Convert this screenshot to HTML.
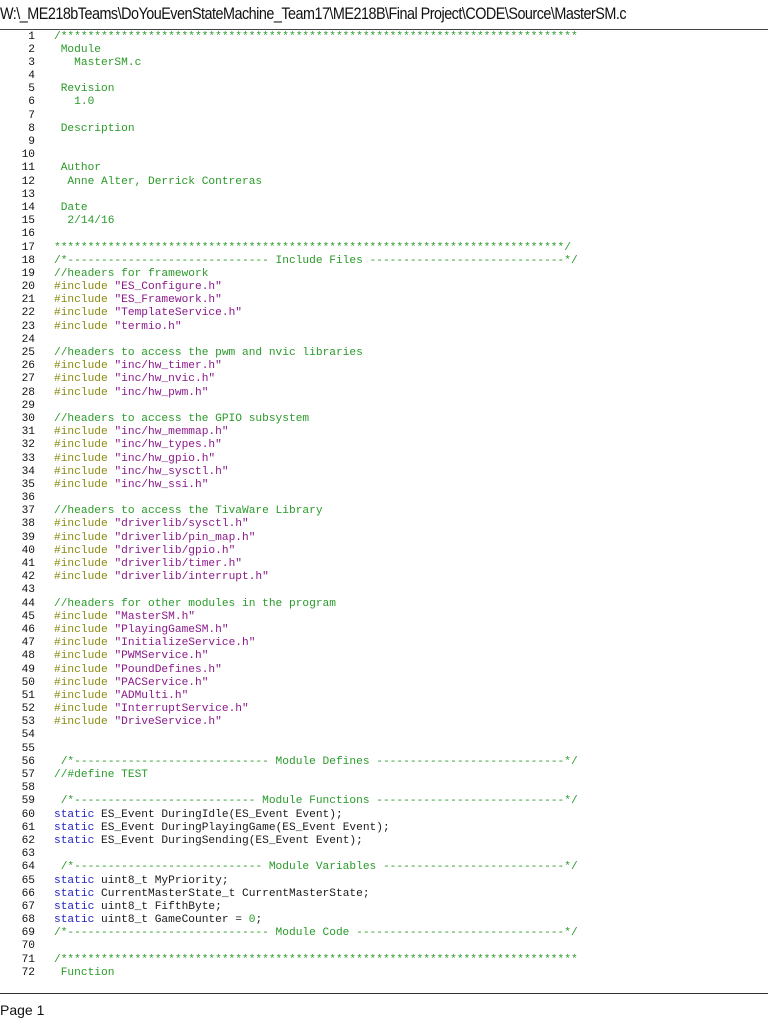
<!DOCTYPE html>
<html><head><meta charset="utf-8"><style>
html,body{margin:0;padding:0;background:#fff;width:768px;height:1024px;overflow:hidden}
.hdr{position:absolute;left:0;top:4px;font:17px "Liberation Sans",sans-serif;color:#111;letter-spacing:-0.6px;white-space:nowrap;transform:scaleX(0.846);transform-origin:0 0}
.hl{position:absolute;left:0;top:29px;width:768px;height:1px;background:#444}
.fl{position:absolute;left:0;top:993px;width:768px;height:1px;background:#333}
.ftr{position:absolute;left:0;top:1002px;font:14px "Liberation Sans",sans-serif;color:#111}
pre{margin:0;position:absolute;top:30.5px;font-family:"Liberation Mono",monospace;font-size:11.2px;line-height:13.18px;white-space:pre}
.ln{left:0;width:35px;text-align:right;color:#111}
.code{left:54px;color:#1a1a1a}
.c{color:#2a9a2a}.p{color:#8a8a10}.s{color:#8b1a8b}.k{color:#2323c0}
</style></head><body>
<div class="hdr">W:\_ME218bTeams\DoYouEvenStateMachine_Team17\ME218B\Final Project\CODE\Source\MasterSM.c</div>
<div class="hl"></div>
<pre class="ln">1
2
3
4
5
6
7
8
9
10
11
12
13
14
15
16
17
18
19
20
21
22
23
24
25
26
27
28
29
30
31
32
33
34
35
36
37
38
39
40
41
42
43
44
45
46
47
48
49
50
51
52
53
54
55
56
57
58
59
60
61
62
63
64
65
66
67
68
69
70
71
72</pre>
<pre class="code"><span class="c">/*****************************************************************************
 Module
   MasterSM.c

 Revision
   1.0

 Description


 Author
  Anne Alter, Derrick Contreras

 Date
  2/14/16

****************************************************************************/
/*------------------------------ Include Files -----------------------------*/
//headers for framework</span>
<span class="p">#include</span> <span class="s">"ES_Configure.h"</span>
<span class="p">#include</span> <span class="s">"ES_Framework.h"</span>
<span class="p">#include</span> <span class="s">"TemplateService.h"</span>
<span class="p">#include</span> <span class="s">"termio.h"</span>

<span class="c">//headers to access the pwm and nvic libraries</span>
<span class="p">#include</span> <span class="s">"inc/hw_timer.h"</span>
<span class="p">#include</span> <span class="s">"inc/hw_nvic.h"</span>
<span class="p">#include</span> <span class="s">"inc/hw_pwm.h"</span>

<span class="c">//headers to access the GPIO subsystem</span>
<span class="p">#include</span> <span class="s">"inc/hw_memmap.h"</span>
<span class="p">#include</span> <span class="s">"inc/hw_types.h"</span>
<span class="p">#include</span> <span class="s">"inc/hw_gpio.h"</span>
<span class="p">#include</span> <span class="s">"inc/hw_sysctl.h"</span>
<span class="p">#include</span> <span class="s">"inc/hw_ssi.h"</span>

<span class="c">//headers to access the TivaWare Library</span>
<span class="p">#include</span> <span class="s">"driverlib/sysctl.h"</span>
<span class="p">#include</span> <span class="s">"driverlib/pin_map.h"</span>
<span class="p">#include</span> <span class="s">"driverlib/gpio.h"</span>
<span class="p">#include</span> <span class="s">"driverlib/timer.h"</span>
<span class="p">#include</span> <span class="s">"driverlib/interrupt.h"</span>

<span class="c">//headers for other modules in the program</span>
<span class="p">#include</span> <span class="s">"MasterSM.h"</span>
<span class="p">#include</span> <span class="s">"PlayingGameSM.h"</span>
<span class="p">#include</span> <span class="s">"InitializeService.h"</span>
<span class="p">#include</span> <span class="s">"PWMService.h"</span>
<span class="p">#include</span> <span class="s">"PoundDefines.h"</span>
<span class="p">#include</span> <span class="s">"PACService.h"</span>
<span class="p">#include</span> <span class="s">"ADMulti.h"</span>
<span class="p">#include</span> <span class="s">"InterruptService.h"</span>
<span class="p">#include</span> <span class="s">"DriveService.h"</span>


<span class="c"> /*----------------------------- Module Defines ----------------------------*/
//#define TEST</span>

<span class="c"> /*--------------------------- Module Functions ----------------------------*/</span>
<span class="k">static</span> ES_Event DuringIdle(ES_Event Event);
<span class="k">static</span> ES_Event DuringPlayingGame(ES_Event Event);
<span class="k">static</span> ES_Event DuringSending(ES_Event Event);

<span class="c"> /*---------------------------- Module Variables ---------------------------*/</span>
<span class="k">static</span> uint8_t MyPriority;
<span class="k">static</span> CurrentMasterState_t CurrentMasterState;
<span class="k">static</span> uint8_t FifthByte;
<span class="k">static</span> uint8_t GameCounter = <span class="c">0</span>;
<span class="c">/*------------------------------ Module Code -------------------------------*/</span>

<span class="c">/*****************************************************************************
 Function</span></pre>
<div class="fl"></div>
<div class="ftr">Page 1</div>
</body></html>
